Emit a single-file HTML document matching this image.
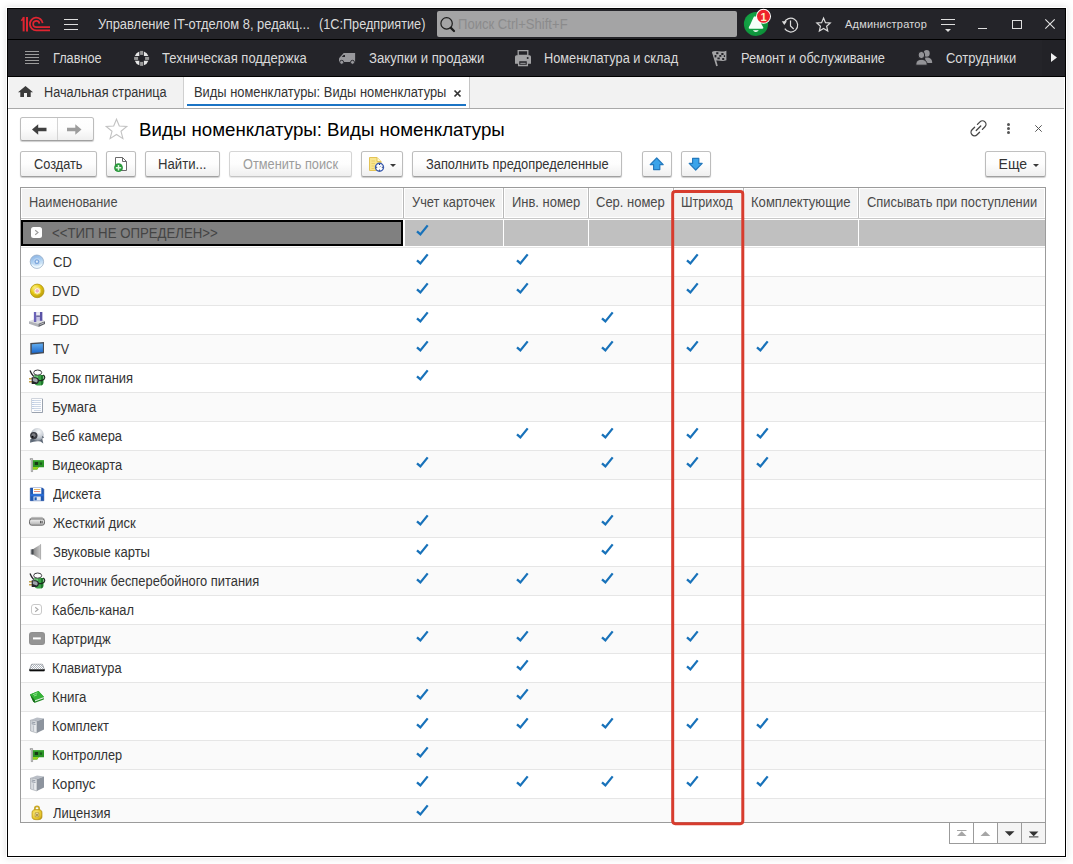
<!DOCTYPE html>
<html lang="ru">
<head>
<meta charset="utf-8">
<title>Виды номенклатуры</title>
<style>
*{box-sizing:border-box;margin:0;padding:0}
html,body{width:1073px;height:864px;overflow:hidden;background:#fff}
body{font-family:"Liberation Sans",sans-serif;font-size:14px;letter-spacing:0;color:#333;position:relative}
.a{position:absolute}
#win{position:absolute;left:7px;top:8px;width:1059px;height:849px;border:1px solid #000;background:#fff;box-shadow:0 0 0 1px #fff,0 0 7px 1px rgba(0,0,0,.13)}
#title{position:absolute;left:8px;top:9px;width:1057px;height:30px;background:#242429}
#tline{position:absolute;left:8px;top:39px;width:1057px;height:1px;background:#000}
#sect{position:absolute;left:8px;top:40px;width:1057px;height:37px;background:#242429}
#sectr{position:absolute;left:1042px;top:40px;width:23px;height:37px;background:#222227}
#tabs{position:absolute;left:9px;top:77px;width:1055px;height:31px;background:#f2f2f2}
#tabsb{position:absolute;left:8px;top:108px;width:1056px;height:1px;background:#a9a9a9}
#tabact{position:absolute;left:183px;top:77px;width:287px;height:31px;background:#fff;border-left:1px solid #d0d0d0;border-right:1px solid #c4c4c4}
#tabul{position:absolute;left:187px;top:104px;width:279px;height:2px;background:#1b74c5}
.t{position:absolute;white-space:nowrap;line-height:16px;height:16px;transform:scaleX(.915);transform-origin:0 50%}
.btn span{display:inline-block;transform:scaleX(.915);transform-origin:50% 50%}
.w{color:#dadada}
.btn{position:absolute;top:151px;height:26px;border:1px solid #bcbcbc;border-top-color:#c0c0c0;border-bottom-color:#a0a0a0;border-radius:2.5px;background:linear-gradient(#ffffff 0%,#fdfdfd 50%,#efefef 100%);box-shadow:0 1px 1px rgba(0,0,0,.2);text-align:center;line-height:24px;color:#333;white-space:nowrap}
.btn.dis{color:#9c9c9c;border-color:#d6d6d6 #d4d4d4 #c4c4c4;box-shadow:0 1px 1px rgba(0,0,0,.1)}
svg{position:absolute;overflow:visible}
</style>
</head>
<body>
<div id="win"></div>
<div id="title"></div>
<div id="tline"></div>
<div id="sect"></div>
<div id="sectr"></div>
<div class="a" style="left:8px;top:76px;width:1057px;height:1px;background:#000"></div>
<div id="tabs"></div>
<div id="tabsb"></div>
<div id="tabact"></div>
<div id="tabul"></div>

<!-- TITLE BAR -->
<svg class="a" style="left:21px;top:16px" width="30" height="16" viewBox="0 0 30 16">
 <g fill="none" stroke="#df2531">
  <path d="M0.300 4.700 L2.600 2.100" stroke-width="1.600"/>
  <path d="M2.650 0.900 V15.400" stroke-width="2"/>
  <path d="M6 0.900 V15.400" stroke-width="2"/>
  <path d="M29 14.450 H15.300 A6.400 6.400 0 1 1 21.640 7.160" stroke-width="1.800"/>
  <path d="M29 11.200 H15.300 A3.150 3.150 0 1 1 18.420 7.600" stroke-width="1.700"/>
 </g>
</svg>
<div class="a" style="left:64px;top:19px;width:14px;height:1px;background:#dedede"></div>
<div class="a" style="left:64px;top:24px;width:14px;height:1px;background:#dedede"></div>
<div class="a" style="left:64px;top:29px;width:14px;height:1px;background:#dedede"></div>
<div class="t w" style="left:97.54px;top:16px;transform:scaleX(0.9240)">Управление IT-отделом 8, редакц...</div>
<div class="t w" style="left:319.12px;top:16px;transform:scaleX(0.9063)">(1С:Предприятие)</div>
<div class="a" style="left:437px;top:11px;width:300px;height:26px;background:#a4a4a5;border-radius:2px"></div>
<svg class="a" style="left:438px;top:14px" width="20" height="20" viewBox="0 0 20 20"><circle cx="8.600" cy="9.400" r="5.700" fill="none" stroke="#1c1c1c" stroke-width="1.200"/><path d="M12.900 13.900 L16 17" stroke="#1c1c1c" stroke-width="2.200" stroke-linecap="round"/></svg>
<div class="t" style="left:458.17px;top:16px;transform:scaleX(0.9339);color:#8b8b8c">Поиск Ctrl+Shift+F</div>

<!-- title right -->
<svg class="a" style="left:743px;top:10px" width="30" height="28" viewBox="0 0 30 28">
 <defs><radialGradient id="gbell" cx=".4" cy=".4" r=".7"><stop offset="0" stop-color="#18ad4c"/><stop offset="1" stop-color="#0b8c36"/></radialGradient></defs>
 <circle cx="13" cy="14" r="12.100" fill="url(#gbell)"/>
 <path d="M11 6.500 C9.500 9 8.300 13 5.800 17.300 Q5.300 18.800 7 18.800 H19 Q20.700 18.800 20.200 17.300 C17.700 13 16.500 9 15 6.500 Z" fill="#f4fff8"/>
 <path d="M9.800 20.300 H15.800 Q14.600 22.100 12.800 22.100 Q11 22.100 9.800 20.300 Z" fill="#f4fff8"/>
 <circle cx="20.500" cy="6.300" r="7.500" fill="#fff"/>
 <circle cx="20.500" cy="6.300" r="6.500" fill="#ee222c"/>
</svg>
<div class="t" style="left:759px;top:9px;width:9px;text-align:center;color:#fff2c4;font-weight:bold;font-size:11px;line-height:16px;letter-spacing:0;transform:none">1</div>
<svg class="a" style="left:781px;top:14.500px" width="20" height="20" viewBox="0 0 20 20">
 <path d="M3.200 8 A6.900 6.900 0 1 1 3.800 13.600" fill="none" stroke="#dcdcdc" stroke-width="1.200"/>
 <path d="M0.800 6.300 L3.300 10 L5.900 6.200 Z" fill="#dcdcdc"/>
 <path d="M9.500 5.600 V11 L12.700 14" fill="none" stroke="#dcdcdc" stroke-width="1.200"/>
</svg>
<svg class="a" style="left:816px;top:16.800px" width="15.100" height="15.100" viewBox="0 0 18 18">
 <path d="M9 1.300 L11.300 6.700 L17 7.200 L12.700 11 L14 16.700 L9 13.700 L4 16.700 L5.300 11 L1 7.200 L6.700 6.700 Z" fill="none" stroke="#dcdcdc" stroke-width="1.400" stroke-linejoin="miter"/>
</svg>
<div class="t w" style="left:845px;top:17px;font-size:11px;letter-spacing:.2px;line-height:15px;transform:none">Администратор</div>
<div class="a" style="left:941px;top:19px;width:14px;height:1px;background:#dedede"></div>
<div class="a" style="left:941px;top:24px;width:14px;height:1px;background:#dedede"></div>
<svg class="a" style="left:945px;top:29px" width="6" height="3" viewBox="0 0 6 3"><path d="M0 0 H6 L3 3 Z" fill="#dedede"/></svg>
<div class="a" style="left:978px;top:28px;width:9px;height:1px;background:#dedede"></div>
<div class="a" style="left:1012px;top:20px;width:10px;height:9px;border:1px solid #dedede"></div>
<svg class="a" style="left:1045px;top:19px" width="10" height="10" viewBox="0 0 10 10"><path d="M0.300 0.300 L9.700 9.700 M9.700 0.300 L0.300 9.700" stroke="#e4e4e4" stroke-width="1.100"/></svg>

<!-- SECTION BAR -->
<div class="a" style="left:25px;top:51px;width:14px;height:1px;background:#9c9c9c"></div>
<div class="a" style="left:25px;top:54px;width:14px;height:1px;background:#9c9c9c"></div>
<div class="a" style="left:25px;top:57px;width:14px;height:1px;background:#9c9c9c"></div>
<div class="a" style="left:25px;top:60px;width:14px;height:1px;background:#9c9c9c"></div>
<div class="a" style="left:25px;top:63px;width:14px;height:1px;background:#9c9c9c"></div>
<div class="t w" style="left:52.89px;top:50px;transform:scaleX(0.9096)">Главное</div>
<svg class="a" style="left:134px;top:51px" width="15" height="15" viewBox="0 0 15 15">
 <g transform="translate(7.600,7.400)">
  <g fill="#e6e6e6">
   <path id="lbq" d="M-2.300 -6.800 A7.200 7.200 0 0 0 -6.800 -2.300 L-2.300 -2.300 Z"/>
   <path d="M-2.300 -6.800 A7.200 7.200 0 0 0 -6.800 -2.300 L-2.300 -2.300 Z" transform="rotate(90)"/>
   <path d="M-2.300 -6.800 A7.200 7.200 0 0 0 -6.800 -2.300 L-2.300 -2.300 Z" transform="rotate(180)"/>
   <path d="M-2.300 -6.800 A7.200 7.200 0 0 0 -6.800 -2.300 L-2.300 -2.300 Z" transform="rotate(270)"/>
  </g>
  <g fill="#9a9a9a">
   <rect x="-1.500" y="-7.500" width="3" height="4"/>
   <rect x="-1.500" y="3.500" width="3" height="4"/>
   <rect x="-7.500" y="-1.500" width="4" height="3"/>
   <rect x="3.500" y="-1.500" width="4" height="3"/>
  </g>
 </g>
</svg>
<div class="t w" style="left:162.27px;top:50px;transform:scaleX(0.9276)">Техническая поддержка</div>
<svg class="a" style="left:338px;top:52px" width="18" height="12" viewBox="0 0 18 12">
 <path d="M1 10 V6.200 L5.700 0.900 H17.100 V10 Z" fill="#98989c"/>
 <path d="M5.600 3 L3.800 4.900 H7 V3 Z" fill="#242429"/>
 <circle cx="3.700" cy="10.300" r="2" fill="#98989c" stroke="#242429" stroke-width=".9"/>
 <circle cx="14.500" cy="10.300" r="2" fill="#98989c" stroke="#242429" stroke-width=".9"/>
</svg>
<div class="t w" style="left:369.03px;top:50px;transform:scaleX(0.9410)">Закупки и продажи</div>
<svg class="a" style="left:514px;top:50px" width="18" height="17" viewBox="0 0 18 17">
 <path d="M4.200 0.600 H13.800 V5.500 H4.200 Z" fill="none" stroke="#a2a2a4" stroke-width="1.300"/>
 <path d="M2.500 5.200 H15.500 A1.500 1.500 0 0 1 17 6.700 V13.700 H14 V10 H4 V13.700 H1 V6.700 A1.500 1.500 0 0 1 2.500 5.200 Z" fill="#a2a2a4"/>
 <circle cx="13.700" cy="8" r="1" fill="#242429"/>
 <path d="M4.600 10.600 H13.400 V15.500 H4.600 Z" fill="none" stroke="#a2a2a4" stroke-width="1.300"/>
 <path d="M6.300 13.300 H11.700" stroke="#a2a2a4" stroke-width="1"/>
</svg>
<div class="t w" style="left:544.49px;top:50px;transform:scaleX(0.9125)">Номенклатура и склад</div>
<svg class="a" style="left:712px;top:50px" width="16" height="17" viewBox="0 0 16 17">
 <path d="M0.200 1.800 C4 -0.300 8.500 3 14.400 0.800 L14.400 10.300 C9.500 12 6.500 9.500 3.200 11 Z" fill="#a4a4a6"/>
 <path d="M0.800 2 L5 16" stroke="#a4a4a6" stroke-width="1.700"/>
 <g fill="#242429">
  <rect x="4.200" y="2.200" width="2.200" height="2"/>
  <rect x="9.300" y="3" width="2.200" height="2"/>
  <rect x="2.600" y="5" width="1.800" height="2.400"/>
  <rect x="7.300" y="5" width="2" height="1.800"/>
  <rect x="11.800" y="5.200" width="1.300" height="1.800"/>
  <rect x="5.400" y="7.500" width="2.400" height="1.800"/>
  <rect x="10.200" y="8" width="2" height="2"/>
 </g>
</svg>
<div class="t w" style="left:740.78px;top:50px;transform:scaleX(0.9156)">Ремонт и обслуживание</div>
<svg class="a" style="left:915px;top:50px" width="18" height="16" viewBox="0 0 18 16">
 <ellipse cx="11.700" cy="3.400" rx="3" ry="3.300" fill="#939397"/>
 <path d="M10 7.800 C14 7 17.200 8.500 17.200 13 H11 Z" fill="#939397"/>
 <ellipse cx="6.400" cy="5" rx="3.300" ry="3.600" fill="#939397" stroke="#242429" stroke-width="1"/>
 <path d="M0.800 15.200 C0.800 11 3 9.400 6.400 9.400 S12.200 11 12.200 15.200 Z" fill="#939397" stroke="#242429" stroke-width="1"/>
</svg>
<div class="t w" style="left:945.71px;top:50px;transform:scaleX(0.9266)">Сотрудники</div>
<svg class="a" style="left:1051px;top:53px" width="6" height="9" viewBox="0 0 6 9"><path d="M0 0 L6 4.500 L0 9 Z" fill="#f0f0f0"/></svg>

<!-- TABS -->
<svg class="a" style="left:18px;top:86px" width="15" height="11" viewBox="0 0 15 11">
 <path d="M7.500 0 L15 6.200 H12.700 V11 H9 V7 H6 V11 H2.300 V6.200 H0 Z" fill="#3c3c3c"/>
</svg>
<div class="t" style="left:44.09px;top:84px;transform:scaleX(0.9056)">Начальная страница</div>
<div class="t" style="left:193.88px;top:84px;transform:scaleX(0.9210)">Виды номенклатуры: Виды номенклатуры</div>
<svg class="a" style="left:454px;top:89.600px" width="7" height="7" viewBox="0 0 7 7"><path d="M0.500 0.500 L6.500 6.500 M6.500 0.500 L0.500 6.500" stroke="#333" stroke-width="1.700"/></svg>

<!-- FORM HEADER -->
<div class="btn" style="left:20px;top:117px;width:74px;height:24px"></div>
<div class="a" style="left:57px;top:118px;width:1px;height:22px;background:#d4d4d4"></div>
<svg class="a" style="left:32px;top:124px" width="15" height="11" viewBox="0 0 15 11"><path d="M0 5.500 L6.200 0.300 V3.800 H14.500 V7.200 H6.200 V10.700 Z" fill="#404040"/></svg>
<svg class="a" style="left:67px;top:124px" width="15" height="11" viewBox="0 0 15 11"><path d="M14.500 5.500 L8.300 0.300 V3.800 H0 V7.200 H8.300 V10.700 Z" fill="#9c9c9c"/></svg>
<svg class="a" style="left:105px;top:118px" width="23" height="22" viewBox="0 0 23 22">
 <path d="M11.500 1.200 L14.300 8 L21.800 8.500 L16 13.300 L17.900 20.600 L11.500 16.500 L5.100 20.600 L7 13.300 L1.200 8.500 L8.700 8 Z" fill="#fff" stroke="#c2c2c2" stroke-width="1.100"/>
</svg>
<div class="t" style="left:139px;top:118px;font-size:18.700px;line-height:24px;height:24px;color:#000;letter-spacing:0;transform:none">Виды номенклатуры: Виды номенклатуры</div>
<svg class="a" style="left:970px;top:120px" width="17" height="17" viewBox="0 0 17 17">
 <g transform="translate(8.500,8.300) rotate(-45)" fill="none" stroke="#454545" stroke-width="1.300" stroke-linecap="round">
  <path d="M2 -3.500 H5.600 A3.500 3.500 0 0 1 5.600 3.500 H2"/>
  <path d="M-2 -3.500 H-5.600 A3.500 3.500 0 0 0 -5.600 3.500 H-2"/>
  <path d="M-3.200 0 H3.200"/>
 </g>
</svg>
<div class="a" style="left:1007px;top:123px;width:3px;height:3px;border-radius:50%;background:#555"></div>
<div class="a" style="left:1007px;top:127px;width:3px;height:3px;border-radius:50%;background:#555"></div>
<div class="a" style="left:1007px;top:131px;width:3px;height:3px;border-radius:50%;background:#555"></div>
<svg class="a" style="left:1035px;top:125px" width="7" height="7" viewBox="0 0 7 7"><path d="M0.300 0.300 L6.700 6.700 M6.700 0.300 L0.300 6.700" stroke="#555" stroke-width="1"/></svg>

<!-- TOOLBAR -->
<div class="btn" style="left:20px;width:77px"></div>
<div class="t" style="left:33.82px;top:156px;transform:scaleX(0.9115)">Создать</div>
<div class="btn" style="left:106px;width:30px"></div>
<svg class="a" style="left:114px;top:157px" width="14" height="15" viewBox="0 0 14 15">
 <path d="M1.500 0.500 H8.500 L12.500 4.500 V13.500 H1.500 Z" fill="#fff" stroke="#6a6a6a" stroke-width="1"/>
 <path d="M8.500 0.500 V4.500 H12.500" fill="none" stroke="#6a6a6a" stroke-width="1"/>
 <circle cx="4.500" cy="10.700" r="4.400" fill="#2a9a3c"/>
 <path d="M4.500 8 V13.400 M1.800 10.700 H7.200" stroke="#dff5e0" stroke-width="1.500"/>
</svg>
<div class="btn" style="left:145px;width:75px"></div>
<div class="t" style="left:158.26px;top:156px;transform:scaleX(0.9394)">Найти...</div>
<div class="btn dis" style="left:229px;width:123px"></div>
<div class="t" style="left:242.92px;top:156px;transform:scaleX(0.9121);color:#9c9c9c">Отменить поиск</div>
<div class="btn" style="left:361px;width:42px"></div>
<svg class="a" style="left:369px;top:157px" width="16" height="15" viewBox="0 0 16 15">
 <path d="M0.500 0.500 H8 L12 4.500 V13.500 H0.500 Z" fill="#f8e58e" stroke="#e3c355" stroke-width="1"/>
 <path d="M8 0.500 V4.500 H12" fill="#fdf6cf" stroke="#e3c355" stroke-width="1"/>
 <path d="M2.500 4 H6 M2.500 6.500 H6 M2.500 9 H5.500 M2.500 11.500 H5.500" stroke="#e9cf6a" stroke-width="1"/>
 <circle cx="10.500" cy="10.300" r="4" fill="#fff" stroke="#3b5cae" stroke-width="1.400"/>
 <path d="M10.500 7 V8 M10.500 12.600 V13.600 M7.200 10.300 H8.200 M12.800 10.300 H13.800" stroke="#1d2f66" stroke-width="1"/>
 <path d="M10.500 10.300 L12 8.800" stroke="#8aa0d8" stroke-width="1"/>
</svg>
<svg class="a" style="left:390px;top:164px" width="6" height="3" viewBox="0 0 6 3"><path d="M0 0 H6 L3 3 Z" fill="#3a3a3a"/></svg>
<div class="btn" style="left:412px;width:210px"></div>
<div class="t" style="left:425.54px;top:156px;transform:scaleX(0.9172)">Заполнить предопределенные</div>
<div class="btn" style="left:642px;width:30px"></div>
<svg class="a" style="left:649px;top:157px" width="16" height="14" viewBox="0 0 16 14"><path d="M7.700 1 L14.200 7.600 H10.800 V12.600 H4.600 V7.600 H1.200 Z" fill="#3ba4ea" stroke="#2479bd" stroke-width="1.200" stroke-linejoin="round"/></svg>
<div class="btn" style="left:681px;width:30px"></div>
<svg class="a" style="left:688px;top:157px" width="16" height="14" viewBox="0 0 16 14"><path d="M7.700 13 L14.200 6.400 H10.800 V1.400 H4.600 V6.400 H1.200 Z" fill="#3ba4ea" stroke="#2479bd" stroke-width="1.200" stroke-linejoin="round"/></svg>
<div class="btn" style="left:985px;width:61px"></div>
<div class="t" style="left:998.60px;top:156px;transform:scaleX(1.0000)">Еще</div>
<svg class="a" style="left:1033px;top:164px" width="6" height="3" viewBox="0 0 6 3"><path d="M0 0 H6 L3 3 Z" fill="#3a3a3a"/></svg>

<!-- TABLE -->
<div id="grid" class="a" style="left:20px;top:187px;width:1026px;height:636px;border:1px solid #9b9b9b;overflow:hidden;background:#fff">
<div class="a" style="left:1px;top:1px;width:380px;height:28px;background:#f2f2f2"></div>
<div class="a" style="left:382px;top:0;width:1px;height:30px;background:#b9b9b9"></div>
<div class="t" style="left:7.59px;top:6px;transform:scaleX(0.9120);color:#4a4a4a">Наименование</div>
<div class="a" style="left:384px;top:1px;width:97px;height:28px;background:#f2f2f2"></div>
<div class="a" style="left:482px;top:0;width:1px;height:30px;background:#b9b9b9"></div>
<div class="t" style="left:390.54px;top:6px;transform:scaleX(0.9156);color:#4a4a4a">Учет карточек</div>
<div class="a" style="left:484px;top:1px;width:82px;height:28px;background:#f2f2f2"></div>
<div class="a" style="left:567px;top:0;width:1px;height:30px;background:#b9b9b9"></div>
<div class="t" style="left:491.17px;top:6px;transform:scaleX(0.9260);color:#4a4a4a">Инв. номер</div>
<div class="a" style="left:569px;top:1px;width:82px;height:28px;background:#f2f2f2"></div>
<div class="a" style="left:652px;top:0;width:1px;height:30px;background:#b9b9b9"></div>
<div class="t" style="left:575.40px;top:6px;transform:scaleX(0.9278);color:#4a4a4a">Сер. номер</div>
<div class="a" style="left:654px;top:1px;width:67px;height:28px;background:#f2f2f2"></div>
<div class="a" style="left:722px;top:0;width:1px;height:30px;background:#b9b9b9"></div>
<div class="t" style="left:660.10px;top:6px;transform:scaleX(0.9013);color:#4a4a4a">Штриход</div>
<div class="a" style="left:724px;top:1px;width:112px;height:28px;background:#f2f2f2"></div>
<div class="a" style="left:837px;top:0;width:1px;height:30px;background:#b9b9b9"></div>
<div class="t" style="left:729.57px;top:6px;transform:scaleX(0.9333);color:#4a4a4a">Комплектующие</div>
<div class="a" style="left:839px;top:1px;width:184px;height:28px;background:#f2f2f2"></div>
<div class="t" style="left:845.51px;top:6px;transform:scaleX(0.9201);color:#4a4a4a">Списывать при поступлении</div>
<div class="a" style="left:0;top:30px;width:1024px;height:1px;background:#c8c8c8"></div>
<div class="a" style="left:0;top:32px;width:1024px;height:26px;background:#c0c0c0"></div>
<div class="a" style="left:382px;top:32px;width:2px;height:26px;background:#fff"></div>
<div class="a" style="left:482px;top:32px;width:1px;height:26px;background:#fff"></div>
<div class="a" style="left:567px;top:32px;width:1px;height:26px;background:#fff"></div>
<div class="a" style="left:652px;top:32px;width:1px;height:26px;background:#fff"></div>
<div class="a" style="left:722px;top:32px;width:1px;height:26px;background:#fff"></div>
<div class="a" style="left:837px;top:32px;width:1px;height:26px;background:#fff"></div>
<div class="a" style="left:0;top:32px;width:382px;height:26px;background:#808080;border:2px solid #000"></div>
<div class="a" style="left:0;top:59px;width:1024px;height:1px;background:#e6e6e6"></div>
<svg class="a" style="left:8px;top:36px" width="16" height="16" viewBox="0 0 16 16"><rect x="2" y="3" width="11" height="11" rx="2.500" fill="#fff"/><path d="M6.200 6.300 L9 8.500 L6.200 10.700" fill="none" stroke="#9a9a9a" stroke-width="1.100"/></svg>
<div class="t" style="left:31.39px;top:37px;transform:scaleX(0.9429);color:#444">&lt;&lt;ТИП НЕ ОПРЕДЕЛЕН&gt;&gt;</div>
<svg class="a" style="left:393px;top:34px" width="18" height="16" viewBox="0 0 18 16"><path d="M3 9.300 L6.400 12.400 L13.700 3.400" fill="none" stroke="#1872ba" stroke-width="2.300"/></svg>
<div class="a" style="left:0;top:60px;width:1024px;height:28px;background:#fff"></div>
<div class="a" style="left:0;top:88px;width:1024px;height:1px;background:#e6e6e6"></div>
<svg class="a" style="left:8px;top:65px" width="16" height="16" viewBox="0 0 16 16"><defs><linearGradient id="g1cd" x1="0" y1="0" x2="0.300" y2="1"><stop offset="0" stop-color="#86afe2"/><stop offset=".5" stop-color="#a9cdf0"/><stop offset="1" stop-color="#e6f4fb"/></linearGradient></defs><circle cx="7.900" cy="8.700" r="6.700" fill="url(#g1cd)" stroke="#93a9c4" stroke-width=".8"/><circle cx="7.900" cy="8.700" r="3" fill="#7ea9de" stroke="#c9def4" stroke-width=".9"/><circle cx="7.900" cy="8.700" r="1.100" fill="#e4effa"/><path d="M3 11.500 A5.800 5.800 0 0 0 12.800 11.500" fill="none" stroke="#f4fbff" stroke-width="1.200" opacity=".8"/></svg>
<div class="t" style="left:31.60px;top:66px;transform:scaleX(0.9280);color:#333">CD</div>
<svg class="a" style="left:393px;top:63px" width="18" height="16" viewBox="0 0 18 16"><path d="M3 9.300 L6.400 12.400 L13.700 3.400" fill="none" stroke="#1872ba" stroke-width="2.300"/></svg>
<svg class="a" style="left:493px;top:63px" width="18" height="16" viewBox="0 0 18 16"><path d="M3 9.300 L6.400 12.400 L13.700 3.400" fill="none" stroke="#1872ba" stroke-width="2.300"/></svg>
<svg class="a" style="left:663px;top:63px" width="18" height="16" viewBox="0 0 18 16"><path d="M3 9.300 L6.400 12.400 L13.700 3.400" fill="none" stroke="#1872ba" stroke-width="2.300"/></svg>
<div class="a" style="left:0;top:89px;width:1024px;height:28px;background:#fafafa"></div>
<div class="a" style="left:0;top:117px;width:1024px;height:1px;background:#e6e6e6"></div>
<svg class="a" style="left:8px;top:94px" width="16" height="16" viewBox="0 0 16 16"><defs><radialGradient id="g2dvd" cx=".35" cy=".3" r=".8"><stop offset="0" stop-color="#fff68a"/><stop offset=".45" stop-color="#e6c915"/><stop offset="1" stop-color="#b3950b"/></radialGradient></defs><circle cx="8.200" cy="8.900" r="6.800" fill="url(#g2dvd)" stroke="#b29510" stroke-width=".8"/><circle cx="8.200" cy="8.900" r="3.300" fill="#fdf6e4" stroke="#efd55a" stroke-width=".9"/><circle cx="8.200" cy="8.900" r="1.400" fill="#efb4cf" stroke="#e79abb" stroke-width=".5"/></svg>
<div class="t" style="left:31.36px;top:95px;transform:scaleX(0.9357);color:#333">DVD</div>
<svg class="a" style="left:393px;top:92px" width="18" height="16" viewBox="0 0 18 16"><path d="M3 9.300 L6.400 12.400 L13.700 3.400" fill="none" stroke="#1872ba" stroke-width="2.300"/></svg>
<svg class="a" style="left:493px;top:92px" width="18" height="16" viewBox="0 0 18 16"><path d="M3 9.300 L6.400 12.400 L13.700 3.400" fill="none" stroke="#1872ba" stroke-width="2.300"/></svg>
<svg class="a" style="left:663px;top:92px" width="18" height="16" viewBox="0 0 18 16"><path d="M3 9.300 L6.400 12.400 L13.700 3.400" fill="none" stroke="#1872ba" stroke-width="2.300"/></svg>
<div class="a" style="left:0;top:118px;width:1024px;height:28px;background:#fff"></div>
<div class="a" style="left:0;top:146px;width:1024px;height:1px;background:#e6e6e6"></div>
<svg class="a" style="left:8px;top:123px" width="16" height="16" viewBox="0 0 16 16"><path d="M0 10.300 L4.500 8.600 H13.500 L16 10.300 L9.500 12.800 Z" fill="#dcdde1"/><path d="M0 10.300 L9.500 12.800 V15.900 L0 12.800 Z" fill="#b0b2b8"/><path d="M9.500 12.800 L16 10.300 V13 L9.500 15.900 Z" fill="#5c5e64"/><path d="M10.500 13.700 L15 11.900" stroke="#c8cacf" stroke-width=".9"/><path d="M4.900 1 H13.300 V9.700 H4.900 Z" fill="#c9c6e6"/><path d="M4.900 1 H7.300 V11 H4.900 Z" fill="#6a62b8"/><path d="M10.900 1 H13.300 V9.800 H10.900 Z" fill="#5a53a6"/><path d="M7.300 1.200 H10.900 V4.600 H7.300 Z" fill="#ededf2"/><path d="M7.300 4.600 H10.900 V5.700 H7.300 Z" fill="#4d4880"/></svg>
<div class="t" style="left:31.37px;top:124px;transform:scaleX(0.9284);color:#333">FDD</div>
<svg class="a" style="left:393px;top:121px" width="18" height="16" viewBox="0 0 18 16"><path d="M3 9.300 L6.400 12.400 L13.700 3.400" fill="none" stroke="#1872ba" stroke-width="2.300"/></svg>
<svg class="a" style="left:578px;top:121px" width="18" height="16" viewBox="0 0 18 16"><path d="M3 9.300 L6.400 12.400 L13.700 3.400" fill="none" stroke="#1872ba" stroke-width="2.300"/></svg>
<div class="a" style="left:0;top:147px;width:1024px;height:28px;background:#fafafa"></div>
<div class="a" style="left:0;top:175px;width:1024px;height:1px;background:#e6e6e6"></div>
<svg class="a" style="left:8px;top:152px" width="16" height="16" viewBox="0 0 16 16"><defs><linearGradient id="g4tv" x1="0" y1="0" x2="0" y2="1"><stop offset="0" stop-color="#62aef0"/><stop offset="1" stop-color="#1c68cc"/></linearGradient></defs><path d="M1.300 3 L15 2 V13.300 L1.300 14.800 Z" fill="#474c55"/><path d="M2.800 4.200 L13.900 3.400 V12 L2.800 13 Z" fill="url(#g4tv)"/></svg>
<div class="t" style="left:31.88px;top:153px;transform:scaleX(0.8971);color:#333">TV</div>
<svg class="a" style="left:393px;top:150px" width="18" height="16" viewBox="0 0 18 16"><path d="M3 9.300 L6.400 12.400 L13.700 3.400" fill="none" stroke="#1872ba" stroke-width="2.300"/></svg>
<svg class="a" style="left:493px;top:150px" width="18" height="16" viewBox="0 0 18 16"><path d="M3 9.300 L6.400 12.400 L13.700 3.400" fill="none" stroke="#1872ba" stroke-width="2.300"/></svg>
<svg class="a" style="left:578px;top:150px" width="18" height="16" viewBox="0 0 18 16"><path d="M3 9.300 L6.400 12.400 L13.700 3.400" fill="none" stroke="#1872ba" stroke-width="2.300"/></svg>
<svg class="a" style="left:663px;top:150px" width="18" height="16" viewBox="0 0 18 16"><path d="M3 9.300 L6.400 12.400 L13.700 3.400" fill="none" stroke="#1872ba" stroke-width="2.300"/></svg>
<svg class="a" style="left:733px;top:150px" width="18" height="16" viewBox="0 0 18 16"><path d="M3 9.300 L6.400 12.400 L13.700 3.400" fill="none" stroke="#1872ba" stroke-width="2.300"/></svg>
<div class="a" style="left:0;top:176px;width:1024px;height:28px;background:#fff"></div>
<div class="a" style="left:0;top:204px;width:1024px;height:1px;background:#e6e6e6"></div>
<svg class="a" style="left:8px;top:181px" width="16" height="16" viewBox="0 0 16 16"><path d="M5.300 6 H14.300 V14 C14.300 17.400 5.300 17.400 5.300 14 Z" fill="#3da449"/><path d="M12 6 H14.300 V14 C14.300 15.500 13 16.300 12 16.500 Z" fill="#1f7a2c"/><path d="M6.300 6.500 H9 V9 H6.300 Z" fill="#7fd488" opacity=".7"/><ellipse cx="8.700" cy="3.600" rx="4" ry="2.600" fill="#fdfdfd" stroke="#3a3a3e" stroke-width="1"/><path d="M1 1.400 C2 4 3 5.600 4.800 7.700" fill="none" stroke="#26262a" stroke-width="1.300"/><path d="M14 6 C16.500 7 16.500 10.500 13 11.300 C11 11.800 9.500 11.500 8.500 11" fill="none" stroke="#1d2a20" stroke-width="1.200"/><path d="M0 9 H3 V10.500 H0 Z M0 12 H3 V13.500 H0 Z" fill="#c4a24c"/><path d="M2.700 8.300 H6 C8.500 8.300 10 9.800 10 11.700 C10 13.600 8.500 15.100 6 15.100 H2.700 Z" fill="#25262a"/><path d="M3.800 9.300 H6 C7.600 9.300 8.700 10.400 8.700 11.700 C8.700 12.500 8.300 13.200 7.500 13.600 L3.800 12 Z" fill="#a0a4ac"/></svg>
<div class="t" style="left:31.38px;top:182px;transform:scaleX(0.9236);color:#333">Блок питания</div>
<svg class="a" style="left:393px;top:179px" width="18" height="16" viewBox="0 0 18 16"><path d="M3 9.300 L6.400 12.400 L13.700 3.400" fill="none" stroke="#1872ba" stroke-width="2.300"/></svg>
<div class="a" style="left:0;top:205px;width:1024px;height:28px;background:#fafafa"></div>
<div class="a" style="left:0;top:233px;width:1024px;height:1px;background:#e6e6e6"></div>
<svg class="a" style="left:8px;top:210px" width="16" height="16" viewBox="0 0 16 16"><path d="M2.500 0.500 H13.500 V14.500 H2.500 Z" fill="#fdfdfe" stroke="#cfd4dc" stroke-width="1"/><path d="M13.500 1 V14.500 H3" fill="none" stroke="#9aa2ae" stroke-width="1"/><path d="M5 2.500 H12 M5 4.500 H12 M5 6.500 H12 M5 8.500 H12 M5 10.500 H12 M5 12.500 H12" stroke="#cdd7e6" stroke-width="1"/><path d="M3.500 2.500 H4.500 M3.500 4.500 H4.500 M3.500 6.500 H4.500 M3.500 8.500 H4.500 M3.500 10.500 H4.500" stroke="#7f9ccc" stroke-width="1"/></svg>
<div class="t" style="left:31.33px;top:211px;transform:scaleX(0.9676);color:#333">Бумага</div>
<div class="a" style="left:0;top:234px;width:1024px;height:28px;background:#fff"></div>
<div class="a" style="left:0;top:262px;width:1024px;height:1px;background:#e6e6e6"></div>
<svg class="a" style="left:8px;top:239px" width="16" height="16" viewBox="0 0 16 16"><defs><radialGradient id="g7wc" cx=".6" cy=".3" r=".8"><stop offset="0" stop-color="#fbfcfd"/><stop offset=".55" stop-color="#c2c8d0"/><stop offset="1" stop-color="#6d7580"/></radialGradient></defs><path d="M1.300 12.300 C4 10.500 10.500 10.500 13.300 11.800 L14.300 16.600 L11.500 14.600 C8 13.900 4.500 14.300 1 15.800 Z" fill="#5f6a78"/><circle cx="8.300" cy="7.500" r="6.400" fill="url(#g7wc)"/><circle cx="4.800" cy="8.600" r="3.700" fill="#3a3c42"/><circle cx="4.600" cy="8.200" r="2" fill="#7b7d83"/><circle cx="3.600" cy="9.800" r="1" fill="#0c0c0e"/><path d="M13 8.800 L15.200 10.300 L13.300 11.800 Z" fill="#626c78"/></svg>
<div class="t" style="left:31.38px;top:240px;transform:scaleX(0.9196);color:#333">Веб камера</div>
<svg class="a" style="left:493px;top:237px" width="18" height="16" viewBox="0 0 18 16"><path d="M3 9.300 L6.400 12.400 L13.700 3.400" fill="none" stroke="#1872ba" stroke-width="2.300"/></svg>
<svg class="a" style="left:578px;top:237px" width="18" height="16" viewBox="0 0 18 16"><path d="M3 9.300 L6.400 12.400 L13.700 3.400" fill="none" stroke="#1872ba" stroke-width="2.300"/></svg>
<svg class="a" style="left:663px;top:237px" width="18" height="16" viewBox="0 0 18 16"><path d="M3 9.300 L6.400 12.400 L13.700 3.400" fill="none" stroke="#1872ba" stroke-width="2.300"/></svg>
<svg class="a" style="left:733px;top:237px" width="18" height="16" viewBox="0 0 18 16"><path d="M3 9.300 L6.400 12.400 L13.700 3.400" fill="none" stroke="#1872ba" stroke-width="2.300"/></svg>
<div class="a" style="left:0;top:263px;width:1024px;height:28px;background:#fafafa"></div>
<div class="a" style="left:0;top:291px;width:1024px;height:1px;background:#e6e6e6"></div>
<svg class="a" style="left:8px;top:268px" width="16" height="16" viewBox="0 0 16 16"><path d="M1.200 2.600 H3.600 V15.600 H2.300 V3.600 H1.200 Z" fill="#fafafa" stroke="#6a6a6a" stroke-width=".6"/><path d="M3.900 4.300 H15 V11.300 H9.600 L8.200 13.500 H3.900 Z" fill="#2a9426"/><path d="M3.900 11 H9.800 L8.200 13.500 H3.900 Z" fill="#94d21c"/><rect x="5.800" y="6" width="3.300" height="3" fill="#163a17"/><rect x="10.800" y="6.500" width="2.200" height="2.200" fill="#1c5a1e"/><path d="M3.900 4.300 H15 V5.300 H3.900 Z" fill="#46b03a"/></svg>
<div class="t" style="left:31.39px;top:269px;transform:scaleX(0.9135);color:#333">Видеокарта</div>
<svg class="a" style="left:393px;top:266px" width="18" height="16" viewBox="0 0 18 16"><path d="M3 9.300 L6.400 12.400 L13.700 3.400" fill="none" stroke="#1872ba" stroke-width="2.300"/></svg>
<svg class="a" style="left:578px;top:266px" width="18" height="16" viewBox="0 0 18 16"><path d="M3 9.300 L6.400 12.400 L13.700 3.400" fill="none" stroke="#1872ba" stroke-width="2.300"/></svg>
<svg class="a" style="left:663px;top:266px" width="18" height="16" viewBox="0 0 18 16"><path d="M3 9.300 L6.400 12.400 L13.700 3.400" fill="none" stroke="#1872ba" stroke-width="2.300"/></svg>
<svg class="a" style="left:733px;top:266px" width="18" height="16" viewBox="0 0 18 16"><path d="M3 9.300 L6.400 12.400 L13.700 3.400" fill="none" stroke="#1872ba" stroke-width="2.300"/></svg>
<div class="a" style="left:0;top:292px;width:1024px;height:28px;background:#fff"></div>
<div class="a" style="left:0;top:320px;width:1024px;height:1px;background:#e6e6e6"></div>
<svg class="a" style="left:8px;top:297px" width="16" height="16" viewBox="0 0 16 16"><path d="M1.300 3 H13.500 L14.800 4.300 V15.700 H1.300 Z" fill="#1e57b2" stroke="#17459a" stroke-width=".6"/><path d="M1.300 9 H14.800 V11.300 H1.300 Z" fill="#2a6cd4"/><path d="M4 3 H12.300 V8.800 H4 Z" fill="#fdfdfd"/><path d="M5 4.500 H11.300" stroke="#e6b45c" stroke-width="1"/><path d="M5 6.500 H11.300" stroke="#e68c7c" stroke-width="1"/><path d="M4.500 11.500 H11.800 V15.700 H4.500 Z" fill="#e4eaf4"/><path d="M5.500 12.300 H7.700 V15.200 H5.500 Z" fill="#1e57b2"/></svg>
<div class="t" style="left:31.80px;top:298px;transform:scaleX(0.9231);color:#333">Дискета</div>
<div class="a" style="left:0;top:321px;width:1024px;height:28px;background:#fafafa"></div>
<div class="a" style="left:0;top:349px;width:1024px;height:1px;background:#e6e6e6"></div>
<svg class="a" style="left:8px;top:326px" width="16" height="16" viewBox="0 0 16 16"><defs><linearGradient id="g10hd" x1="0" y1="0" x2="0" y2="1"><stop offset="0" stop-color="#f4f4f4"/><stop offset="1" stop-color="#b0b0b0"/></linearGradient></defs><path d="M3 3.400 H13 L15.500 5.200 H0.500 Z" fill="#dedede" stroke="#909090" stroke-width=".6"/><rect x="0.500" y="5" width="15" height="6.200" rx="2.200" fill="url(#g10hd)" stroke="#6c6c6c" stroke-width="1"/><path d="M11.600 6.800 V9.300 M13.100 6.800 V9.300" stroke="#3c3c3c" stroke-width=".9"/></svg>
<div class="t" style="left:31.57px;top:327px;transform:scaleX(0.9322);color:#333">Жесткий диск</div>
<svg class="a" style="left:393px;top:324px" width="18" height="16" viewBox="0 0 18 16"><path d="M3 9.300 L6.400 12.400 L13.700 3.400" fill="none" stroke="#1872ba" stroke-width="2.300"/></svg>
<svg class="a" style="left:578px;top:324px" width="18" height="16" viewBox="0 0 18 16"><path d="M3 9.300 L6.400 12.400 L13.700 3.400" fill="none" stroke="#1872ba" stroke-width="2.300"/></svg>
<div class="a" style="left:0;top:350px;width:1024px;height:28px;background:#fff"></div>
<div class="a" style="left:0;top:378px;width:1024px;height:1px;background:#e6e6e6"></div>
<svg class="a" style="left:8px;top:355px" width="16" height="16" viewBox="0 0 16 16"><defs><linearGradient id="g11sp" x1="0" y1="0" x2="1" y2="0"><stop offset="0" stop-color="#868686"/><stop offset="1" stop-color="#cdcdcd"/></linearGradient></defs><path d="M11.800 1.200 V16.600 L4.300 11.700 V6 Z" fill="url(#g11sp)"/><path d="M1.700 6.300 H4.500 V11.500 H1.700 Z" fill="#70747a"/><path d="M3.200 6.300 H4.500 V11.500 H3.200 Z" fill="#3c4044"/><path d="M11.600 1.200 V16.600" stroke="#a2a2a2" stroke-width=".8"/></svg>
<div class="t" style="left:31.63px;top:356px;transform:scaleX(0.9327);color:#333">Звуковые карты</div>
<svg class="a" style="left:393px;top:353px" width="18" height="16" viewBox="0 0 18 16"><path d="M3 9.300 L6.400 12.400 L13.700 3.400" fill="none" stroke="#1872ba" stroke-width="2.300"/></svg>
<svg class="a" style="left:578px;top:353px" width="18" height="16" viewBox="0 0 18 16"><path d="M3 9.300 L6.400 12.400 L13.700 3.400" fill="none" stroke="#1872ba" stroke-width="2.300"/></svg>
<div class="a" style="left:0;top:379px;width:1024px;height:28px;background:#fafafa"></div>
<div class="a" style="left:0;top:407px;width:1024px;height:1px;background:#e6e6e6"></div>
<svg class="a" style="left:8px;top:384px" width="16" height="16" viewBox="0 0 16 16"><path d="M5.300 6 H14.300 V14 C14.300 17.400 5.300 17.400 5.300 14 Z" fill="#3da449"/><path d="M12 6 H14.300 V14 C14.300 15.500 13 16.300 12 16.500 Z" fill="#1f7a2c"/><path d="M6.300 6.500 H9 V9 H6.300 Z" fill="#7fd488" opacity=".7"/><ellipse cx="8.700" cy="3.600" rx="4" ry="2.600" fill="#fdfdfd" stroke="#3a3a3e" stroke-width="1"/><path d="M1 1.400 C2 4 3 5.600 4.800 7.700" fill="none" stroke="#26262a" stroke-width="1.300"/><path d="M14 6 C16.500 7 16.500 10.500 13 11.300 C11 11.800 9.500 11.500 8.500 11" fill="none" stroke="#1d2a20" stroke-width="1.200"/><path d="M0 9 H3 V10.500 H0 Z M0 12 H3 V13.500 H0 Z" fill="#c4a24c"/><path d="M2.700 8.300 H6 C8.500 8.300 10 9.800 10 11.700 C10 13.600 8.500 15.100 6 15.100 H2.700 Z" fill="#25262a"/><path d="M3.800 9.300 H6 C7.600 9.300 8.700 10.400 8.700 11.700 C8.700 12.500 8.300 13.200 7.500 13.600 L3.800 12 Z" fill="#a0a4ac"/></svg>
<div class="t" style="left:31.38px;top:385px;transform:scaleX(0.9196);color:#333">Источник бесперебойного питания</div>
<svg class="a" style="left:393px;top:382px" width="18" height="16" viewBox="0 0 18 16"><path d="M3 9.300 L6.400 12.400 L13.700 3.400" fill="none" stroke="#1872ba" stroke-width="2.300"/></svg>
<svg class="a" style="left:493px;top:382px" width="18" height="16" viewBox="0 0 18 16"><path d="M3 9.300 L6.400 12.400 L13.700 3.400" fill="none" stroke="#1872ba" stroke-width="2.300"/></svg>
<svg class="a" style="left:578px;top:382px" width="18" height="16" viewBox="0 0 18 16"><path d="M3 9.300 L6.400 12.400 L13.700 3.400" fill="none" stroke="#1872ba" stroke-width="2.300"/></svg>
<svg class="a" style="left:663px;top:382px" width="18" height="16" viewBox="0 0 18 16"><path d="M3 9.300 L6.400 12.400 L13.700 3.400" fill="none" stroke="#1872ba" stroke-width="2.300"/></svg>
<div class="a" style="left:0;top:408px;width:1024px;height:28px;background:#fff"></div>
<div class="a" style="left:0;top:436px;width:1024px;height:1px;background:#e6e6e6"></div>
<svg class="a" style="left:8px;top:413px" width="16" height="16" viewBox="0 0 16 16"><rect x="2.500" y="3.500" width="10" height="10" rx="2.500" fill="#fff" stroke="#c9c9c9" stroke-width="1"/><path d="M6.200 6.300 L9 8.500 L6.200 10.700" fill="none" stroke="#a8a8a8" stroke-width="1.100"/></svg>
<div class="t" style="left:31.38px;top:414px;transform:scaleX(0.9203);color:#333">Кабель-канал</div>
<div class="a" style="left:0;top:437px;width:1024px;height:28px;background:#fafafa"></div>
<div class="a" style="left:0;top:465px;width:1024px;height:1px;background:#e6e6e6"></div>
<svg class="a" style="left:8px;top:442px" width="16" height="16" viewBox="0 0 16 16"><rect x="0" y="2" width="16" height="13" rx="3" fill="#8f8f8f"/><rect x="1" y="3" width="14" height="11" rx="2.300" fill="#949494"/><rect x="4" y="7.400" width="7.800" height="2" fill="#fff"/></svg>
<div class="t" style="left:31.37px;top:443px;transform:scaleX(0.9306);color:#333">Картридж</div>
<svg class="a" style="left:393px;top:440px" width="18" height="16" viewBox="0 0 18 16"><path d="M3 9.300 L6.400 12.400 L13.700 3.400" fill="none" stroke="#1872ba" stroke-width="2.300"/></svg>
<svg class="a" style="left:493px;top:440px" width="18" height="16" viewBox="0 0 18 16"><path d="M3 9.300 L6.400 12.400 L13.700 3.400" fill="none" stroke="#1872ba" stroke-width="2.300"/></svg>
<svg class="a" style="left:578px;top:440px" width="18" height="16" viewBox="0 0 18 16"><path d="M3 9.300 L6.400 12.400 L13.700 3.400" fill="none" stroke="#1872ba" stroke-width="2.300"/></svg>
<svg class="a" style="left:663px;top:440px" width="18" height="16" viewBox="0 0 18 16"><path d="M3 9.300 L6.400 12.400 L13.700 3.400" fill="none" stroke="#1872ba" stroke-width="2.300"/></svg>
<div class="a" style="left:0;top:466px;width:1024px;height:28px;background:#fff"></div>
<div class="a" style="left:0;top:494px;width:1024px;height:1px;background:#e6e6e6"></div>
<svg class="a" style="left:8px;top:471px" width="16" height="16" viewBox="0 0 16 16"><defs><pattern id="p15kb" width="2" height="2" patternUnits="userSpaceOnUse"><rect width="2" height="2" fill="#fff"/><rect width="1" height="1" fill="#aeb4bc"/><rect x="1" y="1" width="1" height="1" fill="#aeb4bc"/></pattern></defs><path d="M0.300 10 L2 5.600 C2.200 5 2.600 4.800 3.200 4.800 H12.800 C13.400 4.800 13.800 5 14 5.600 L15.700 10 V11.300 C15.700 12 15.300 12.300 14.700 12.300 H1.300 C.7 12.300 .3 12 .3 11.300 Z" fill="#9ea2a8"/><path d="M0.300 10.200 H15.700 V11.300 C15.700 12 15.300 12.300 14.700 12.300 H1.300 C.7 12.300 .3 12 .3 11.300 Z" fill="#0c0c0c"/><path d="M1.200 9.800 L2.800 5.900 C2.900 5.700 3.100 5.600 3.400 5.600 H12.600 C12.900 5.600 13.100 5.700 13.200 5.900 L14.800 9.800 C14.900 10.100 14.700 10.300 14.400 10.300 H1.600 C1.300 10.300 1.100 10.100 1.200 9.800 Z" fill="url(#p15kb)"/></svg>
<div class="t" style="left:31.38px;top:472px;transform:scaleX(0.9173);color:#333">Клавиатура</div>
<svg class="a" style="left:493px;top:469px" width="18" height="16" viewBox="0 0 18 16"><path d="M3 9.300 L6.400 12.400 L13.700 3.400" fill="none" stroke="#1872ba" stroke-width="2.300"/></svg>
<svg class="a" style="left:663px;top:469px" width="18" height="16" viewBox="0 0 18 16"><path d="M3 9.300 L6.400 12.400 L13.700 3.400" fill="none" stroke="#1872ba" stroke-width="2.300"/></svg>
<div class="a" style="left:0;top:495px;width:1024px;height:28px;background:#fafafa"></div>
<div class="a" style="left:0;top:523px;width:1024px;height:1px;background:#e6e6e6"></div>
<svg class="a" style="left:8px;top:500px" width="16" height="16" viewBox="0 0 16 16"><path d="M1 6.500 L9.500 3 L15 9 L14.800 11.500 L6 14.800 L4.300 13.800 Z" fill="#1f8a22"/><path d="M1 6.500 L9.500 3 L15 9 L5.800 12.300 Z" fill="#35b437"/><path d="M5.800 12.300 L15 9 L14.800 10.300 L5.900 13.600 Z" fill="#daf0da"/><path d="M4 6.700 L8.500 4.800 M5 8 L8 6.800" stroke="#93e493" stroke-width=".9"/><path d="M1 6.500 L5.800 12.300 L6 14.800 L4.300 13.800 Z" fill="#166a1a"/></svg>
<div class="t" style="left:31.35px;top:501px;transform:scaleX(0.9475);color:#333">Книга</div>
<svg class="a" style="left:393px;top:498px" width="18" height="16" viewBox="0 0 18 16"><path d="M3 9.300 L6.400 12.400 L13.700 3.400" fill="none" stroke="#1872ba" stroke-width="2.300"/></svg>
<svg class="a" style="left:493px;top:498px" width="18" height="16" viewBox="0 0 18 16"><path d="M3 9.300 L6.400 12.400 L13.700 3.400" fill="none" stroke="#1872ba" stroke-width="2.300"/></svg>
<div class="a" style="left:0;top:524px;width:1024px;height:28px;background:#fff"></div>
<div class="a" style="left:0;top:552px;width:1024px;height:1px;background:#e6e6e6"></div>
<svg class="a" style="left:8px;top:529px" width="16" height="16" viewBox="0 0 16 16"><defs><linearGradient id="g17cs" x1="0" y1="0" x2="1" y2="0"><stop offset="0" stop-color="#cfd3d8"/><stop offset="1" stop-color="#eef0f2"/></linearGradient></defs><path d="M1.500 3 L8 0.500 L15 1.500 L7.800 4.300 Z" fill="#b9bec6"/><path d="M7.800 4.300 L15 1.500 V12.500 L7.800 16 Z" fill="#8d949e"/><path d="M1.500 3 L7.800 4.300 V16 L1.500 14 Z" fill="url(#g17cs)" stroke="#8a9098" stroke-width=".5"/><path d="M2.700 5 L6.500 5.800 M2.700 6.700 L6.500 7.500" stroke="#7f8894" stroke-width=".8"/><path d="M4.500 8.500 V14.500" stroke="#b0b6be" stroke-width=".7"/></svg>
<div class="t" style="left:31.38px;top:530px;transform:scaleX(0.9190);color:#333">Комплект</div>
<svg class="a" style="left:393px;top:527px" width="18" height="16" viewBox="0 0 18 16"><path d="M3 9.300 L6.400 12.400 L13.700 3.400" fill="none" stroke="#1872ba" stroke-width="2.300"/></svg>
<svg class="a" style="left:493px;top:527px" width="18" height="16" viewBox="0 0 18 16"><path d="M3 9.300 L6.400 12.400 L13.700 3.400" fill="none" stroke="#1872ba" stroke-width="2.300"/></svg>
<svg class="a" style="left:578px;top:527px" width="18" height="16" viewBox="0 0 18 16"><path d="M3 9.300 L6.400 12.400 L13.700 3.400" fill="none" stroke="#1872ba" stroke-width="2.300"/></svg>
<svg class="a" style="left:663px;top:527px" width="18" height="16" viewBox="0 0 18 16"><path d="M3 9.300 L6.400 12.400 L13.700 3.400" fill="none" stroke="#1872ba" stroke-width="2.300"/></svg>
<svg class="a" style="left:733px;top:527px" width="18" height="16" viewBox="0 0 18 16"><path d="M3 9.300 L6.400 12.400 L13.700 3.400" fill="none" stroke="#1872ba" stroke-width="2.300"/></svg>
<div class="a" style="left:0;top:553px;width:1024px;height:28px;background:#fafafa"></div>
<div class="a" style="left:0;top:581px;width:1024px;height:1px;background:#e6e6e6"></div>
<svg class="a" style="left:8px;top:558px" width="16" height="16" viewBox="0 0 16 16"><path d="M1.200 2.600 H3.600 V15.600 H2.300 V3.600 H1.200 Z" fill="#fafafa" stroke="#6a6a6a" stroke-width=".6"/><path d="M3.900 4.300 H15 V11.300 H9.600 L8.200 13.500 H3.900 Z" fill="#2a9426"/><path d="M3.900 11 H9.800 L8.200 13.500 H3.900 Z" fill="#94d21c"/><rect x="5.800" y="6" width="3.300" height="3" fill="#163a17"/><rect x="10.800" y="6.500" width="2.200" height="2.200" fill="#1c5a1e"/><path d="M3.900 4.300 H15 V5.300 H3.900 Z" fill="#46b03a"/></svg>
<div class="t" style="left:31.39px;top:559px;transform:scaleX(0.9083);color:#333">Контроллер</div>
<svg class="a" style="left:393px;top:556px" width="18" height="16" viewBox="0 0 18 16"><path d="M3 9.300 L6.400 12.400 L13.700 3.400" fill="none" stroke="#1872ba" stroke-width="2.300"/></svg>
<div class="a" style="left:0;top:582px;width:1024px;height:28px;background:#fff"></div>
<div class="a" style="left:0;top:610px;width:1024px;height:1px;background:#e6e6e6"></div>
<svg class="a" style="left:8px;top:587px" width="16" height="16" viewBox="0 0 16 16"><defs><linearGradient id="g19cs" x1="0" y1="0" x2="1" y2="0"><stop offset="0" stop-color="#cfd3d8"/><stop offset="1" stop-color="#eef0f2"/></linearGradient></defs><path d="M1.500 3 L8 0.500 L15 1.500 L7.800 4.300 Z" fill="#b9bec6"/><path d="M7.800 4.300 L15 1.500 V12.500 L7.800 16 Z" fill="#8d949e"/><path d="M1.500 3 L7.800 4.300 V16 L1.500 14 Z" fill="url(#g19cs)" stroke="#8a9098" stroke-width=".5"/><path d="M2.700 5 L6.500 5.800 M2.700 6.700 L6.500 7.500" stroke="#7f8894" stroke-width=".8"/><path d="M4.500 8.500 V14.500" stroke="#b0b6be" stroke-width=".7"/></svg>
<div class="t" style="left:31.34px;top:588px;transform:scaleX(0.9646);color:#333">Корпус</div>
<svg class="a" style="left:393px;top:585px" width="18" height="16" viewBox="0 0 18 16"><path d="M3 9.300 L6.400 12.400 L13.700 3.400" fill="none" stroke="#1872ba" stroke-width="2.300"/></svg>
<svg class="a" style="left:493px;top:585px" width="18" height="16" viewBox="0 0 18 16"><path d="M3 9.300 L6.400 12.400 L13.700 3.400" fill="none" stroke="#1872ba" stroke-width="2.300"/></svg>
<svg class="a" style="left:578px;top:585px" width="18" height="16" viewBox="0 0 18 16"><path d="M3 9.300 L6.400 12.400 L13.700 3.400" fill="none" stroke="#1872ba" stroke-width="2.300"/></svg>
<svg class="a" style="left:663px;top:585px" width="18" height="16" viewBox="0 0 18 16"><path d="M3 9.300 L6.400 12.400 L13.700 3.400" fill="none" stroke="#1872ba" stroke-width="2.300"/></svg>
<svg class="a" style="left:733px;top:585px" width="18" height="16" viewBox="0 0 18 16"><path d="M3 9.300 L6.400 12.400 L13.700 3.400" fill="none" stroke="#1872ba" stroke-width="2.300"/></svg>
<div class="a" style="left:0;top:611px;width:1024px;height:28px;background:#fafafa"></div>
<div class="a" style="left:0;top:639px;width:1024px;height:1px;background:#e6e6e6"></div>
<svg class="a" style="left:8px;top:616px" width="16" height="16" viewBox="0 0 16 16"><defs><radialGradient id="g20lk" cx=".4" cy=".4" r=".7"><stop offset="0" stop-color="#fff28e"/><stop offset=".7" stop-color="#e6c42a"/><stop offset="1" stop-color="#b69214"/></radialGradient></defs><path d="M5.900 6 V4 C5.900 1.800 10.100 1.800 10.100 4 V6" fill="none" stroke="#c9a826" stroke-width="1.700"/><path d="M3 8.500 C3 6 5 5.500 8 5.500 S13 6 13 8.500 V12.700 C13 15.200 11 15.700 8 15.700 S3 15.200 3 12.700 Z" fill="url(#g20lk)" stroke="#b4941a" stroke-width=".7"/><path d="M6.200 8.800 H9.800 V12.800 H6.200 Z" fill="#fff9cf" stroke="#a4821a" stroke-width=".7"/><path d="M7.300 9.800 L8.700 11.800 M8.700 9.800 L7.300 11.800" stroke="#86660e" stroke-width=".8"/></svg>
<div class="t" style="left:32.10px;top:617px;transform:scaleX(0.9257);color:#333">Лицензия</div>
<svg class="a" style="left:393px;top:614px" width="18" height="16" viewBox="0 0 18 16"><path d="M3 9.300 L6.400 12.400 L13.700 3.400" fill="none" stroke="#1872ba" stroke-width="2.300"/></svg>
</div>
<div class="a" style="left:949px;top:822px;width:97px;height:22px;border:1px solid #9b9b9b;background:linear-gradient(90deg,#fff 0,#fff 48px,#f4f4f4 48px,#f4f4f4 100%)"></div>
<div class="a" style="left:973px;top:823px;width:1px;height:20px;background:#9b9b9b"></div>
<div class="a" style="left:997px;top:823px;width:1px;height:20px;background:#9b9b9b"></div>
<div class="a" style="left:1021px;top:823px;width:1px;height:20px;background:#9b9b9b"></div>
<svg class="a" style="left:956px;top:830px" width="11" height="7" viewBox="0 0 11 7"><path d="M1 0.500 H10.500" stroke="#a6a6a6" stroke-width="1"/><path d="M5.750 1.200 L10.500 6 H1 Z" fill="#a6a6a6"/></svg>
<svg class="a" style="left:980px;top:831px" width="11" height="6" viewBox="0 0 11 6"><path d="M5.400 0.200 L10.300 5 H0.500 Z" fill="#a6a6a6"/></svg>
<svg class="a" style="left:1004px;top:831px" width="11" height="6" viewBox="0 0 11 6"><path d="M5.600 5 L10.500 0.200 H0.800 Z" fill="#333"/></svg>
<svg class="a" style="left:1028px;top:831px" width="11" height="7" viewBox="0 0 11 7"><path d="M1 5.900 H10.400" stroke="#333" stroke-width="1"/><path d="M5.700 5.200 L10.400 0.500 H1 Z" fill="#333"/></svg>
<svg class="a" style="left:668px;top:186px" width="80" height="644" viewBox="0 0 80 644"><rect x="4.700" y="5.500" width="70.100" height="632.200" rx="2.600" fill="none" stroke="#d73c2e" stroke-width="3"/></svg>
</body>
</html>
